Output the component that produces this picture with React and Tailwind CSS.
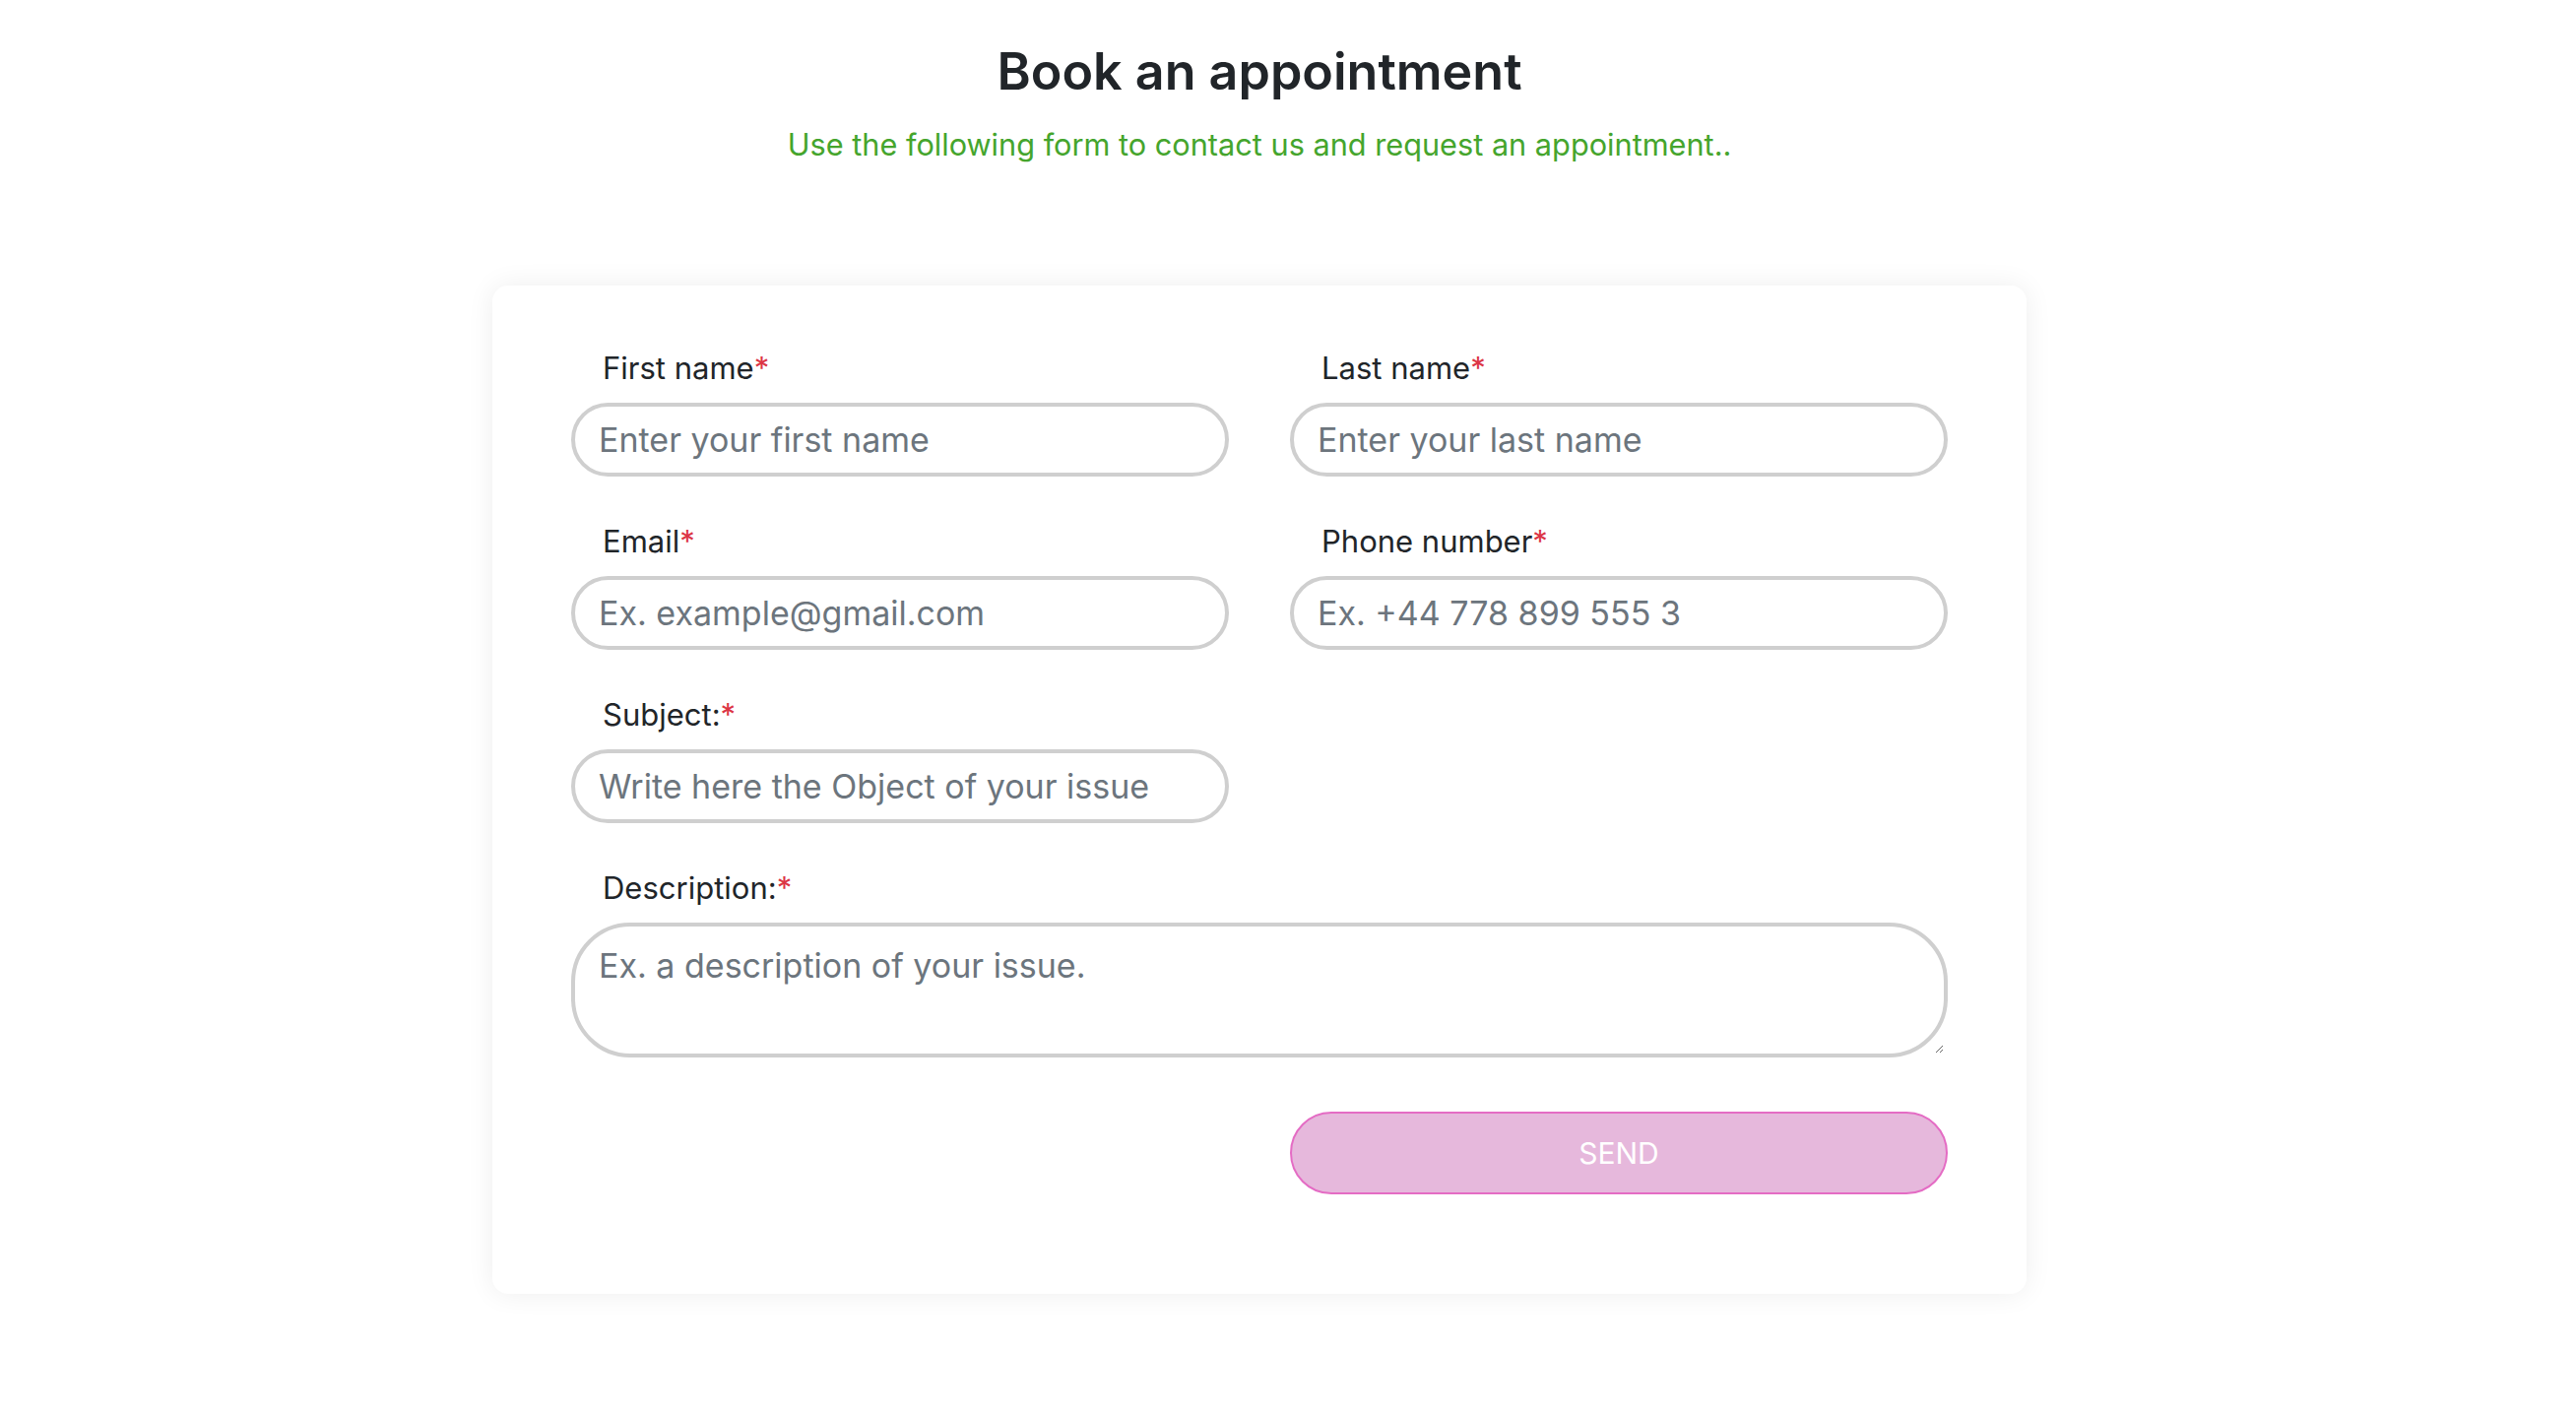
import React from 'react';

const font = { fontFamily: 'Inter, "Noto Sans", sans-serif' };

function Field({ label, placeholder, className = '' }) {
  return (
    <div className={`flex flex-col ${className}`}>
      <label className="h-[40px] pl-[32px] text-[31px] leading-[40px] text-[#212529]">
        {label}
        <span className="text-[#dc3545]">*</span>
      </label>
      <input
        type="text"
        placeholder={placeholder}
        className="mt-[15px] h-[75px] w-full rounded-full border-[4px] border-[#cfcfcf] bg-white px-[24px] text-[34px] text-[#212529] outline-none placeholder:text-[#6c757d]"
      />
    </div>
  );
}

export default function App() {
  return (
    <div className="min-h-screen bg-white pr-[58px]" style={font}>
      <div className="flex flex-col items-center">
        <h1 className="mt-[37px] text-[52px] font-semibold leading-[72px] text-[#212529]">Book an appointment</h1>
        <p className="mt-[18px] text-[30.7px] leading-[40px] text-[#45a52d]">
          Use the following form to contact us and request an appointment..
        </p>

        <form className="mt-[123px] w-[1558px] rounded-[16px] bg-white px-[80px] pt-[64px] pb-[101px] shadow-[0_0_28px_rgba(0,0,0,0.07)]">
          <div className="grid grid-cols-2 gap-x-[62px] gap-y-[46px]">
            <Field label="First name" placeholder="Enter your first name" />
            <Field label="Last name" placeholder="Enter your last name" />
            <Field label="Email" placeholder="Ex. example@gmail.com" />
            <Field label="Phone number" placeholder="Ex. +44 778 899 555 3" />
            <Field label="Subject:" placeholder="Write here the Object of your issue" />
            <div />
            <div className="col-span-2 flex flex-col">
              <label className="h-[40px] pl-[32px] text-[31px] leading-[40px] text-[#212529]">
                Description:<span className="text-[#dc3545]">*</span>
              </label>
              <textarea
                placeholder="Ex. a description of your issue."
                className="mt-[15px] h-[137px] w-full rounded-[60px] border-[4px] border-[#cfcfcf] bg-white px-[24px] pt-[18px] text-[34px] leading-[44px] text-[#212529] outline-none placeholder:text-[#6c757d]"
              />
            </div>
          </div>
          <div className="mt-[55px] grid grid-cols-2 gap-x-[62px]">
            <div />
            <button
              type="button"
              className="h-[84px] w-full rounded-full border-[2px] border-[#e46cc4] bg-[#e6b8dc] text-[30px] text-white"
            >
              SEND
            </button>
          </div>
        </form>
      </div>
    </div>
  );
}
